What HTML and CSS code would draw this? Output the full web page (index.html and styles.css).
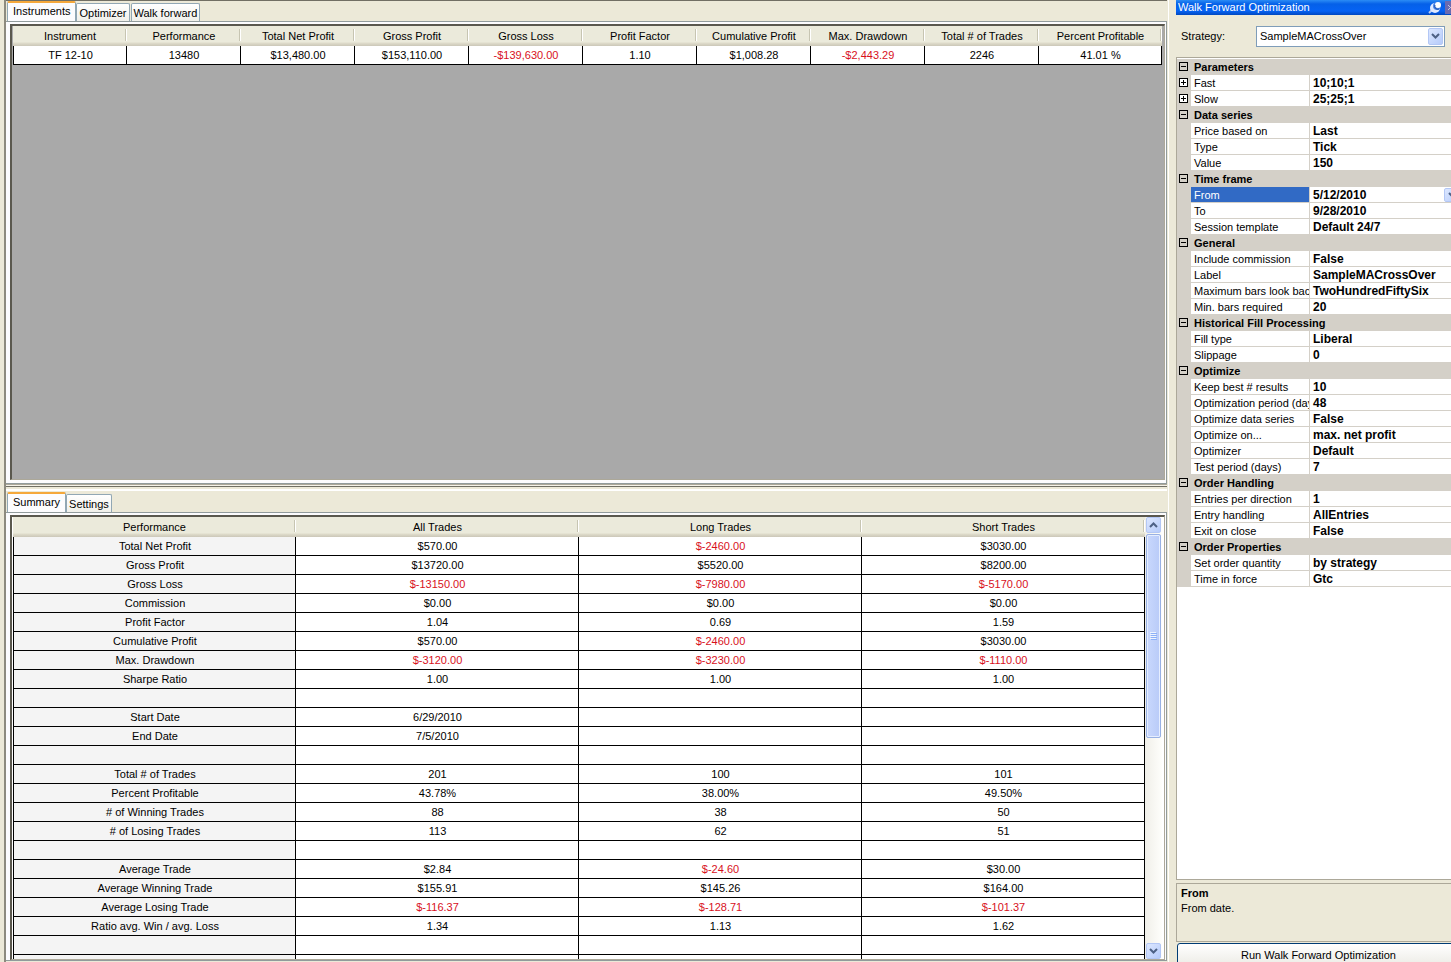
FILE: index.html
```html
<!DOCTYPE html>
<html lang="en">

<head>
    <meta charset="utf-8" />
    <meta name="viewport" content="width=device-width, initial-scale=1.0" />
    <title>Walk Forward Optimization</title>
    <link rel="stylesheet" href="styles.css">
</head>

<body>
    <main class="results">
        <section class="pane pane-top">
            <div class="tabs" role="tablist">
                <button class="tab active" role="tab" aria-selected="true">Instruments</button>
                <button class="tab" role="tab">Optimizer</button>
                <button class="tab" role="tab">Walk forward</button>
            </div>
            <div class="tab-page">
                <div class="grid-box">
                    <table class="grid instruments">
                        <thead>
                            <tr>
                                <th>Instrument</th>
                                <th>Performance</th>
                                <th>Total Net Profit</th>
                                <th>Gross Profit</th>
                                <th>Gross Loss</th>
                                <th>Profit Factor</th>
                                <th>Cumulative Profit</th>
                                <th>Max. Drawdown</th>
                                <th>Total # of Trades</th>
                                <th class="last">Percent Profitable</th>
                            </tr>
                        </thead>
                        <tbody>
                            <tr>
                                <td>TF 12-10</td>
                                <td>13480</td>
                                <td>$13,480.00</td>
                                <td>$153,110.00</td>
                                <td class="neg">-$139,630.00</td>
                                <td>1.10</td>
                                <td>$1,008.28</td>
                                <td class="neg">-$2,443.29</td>
                                <td>2246</td>
                                <td>41.01 %</td>
                            </tr>
                        </tbody>
                    </table>
                </div>
            </div>
        </section>

        <div class="splitter"></div>

        <section class="pane pane-bottom">
            <div class="tabs" role="tablist">
                <button class="tab active" role="tab" aria-selected="true">Summary</button>
                <button class="tab" role="tab">Settings</button>
            </div>
            <div class="tab-page">
                <div class="grid-box summary-box">
                    <div class="grid-scroll">
                        <table class="grid summary">
                            <thead>
                                <tr><th>Performance</th><th>All Trades</th><th>Long Trades</th><th>Short Trades</th></tr>
                            </thead>
                            <tbody>
                                <tr><td>Total Net Profit</td><td>$570.00</td><td class="neg">$-2460.00</td><td>$3030.00</td></tr>
                                <tr><td>Gross Profit</td><td>$13720.00</td><td>$5520.00</td><td>$8200.00</td></tr>
                                <tr><td>Gross Loss</td><td class="neg">$-13150.00</td><td class="neg">$-7980.00</td><td class="neg">$-5170.00</td></tr>
                                <tr><td>Commission</td><td>$0.00</td><td>$0.00</td><td>$0.00</td></tr>
                                <tr><td>Profit Factor</td><td>1.04</td><td>0.69</td><td>1.59</td></tr>
                                <tr><td>Cumulative Profit</td><td>$570.00</td><td class="neg">$-2460.00</td><td>$3030.00</td></tr>
                                <tr><td>Max. Drawdown</td><td class="neg">$-3120.00</td><td class="neg">$-3230.00</td><td class="neg">$-1110.00</td></tr>
                                <tr><td>Sharpe Ratio</td><td>1.00</td><td>1.00</td><td>1.00</td></tr>
                                <tr><td></td><td></td><td></td><td></td></tr>
                                <tr><td>Start Date</td><td>6/29/2010</td><td></td><td></td></tr>
                                <tr><td>End Date</td><td>7/5/2010</td><td></td><td></td></tr>
                                <tr><td></td><td></td><td></td><td></td></tr>
                                <tr><td>Total # of Trades</td><td>201</td><td>100</td><td>101</td></tr>
                                <tr><td>Percent Profitable</td><td>43.78%</td><td>38.00%</td><td>49.50%</td></tr>
                                <tr><td># of Winning Trades</td><td>88</td><td>38</td><td>50</td></tr>
                                <tr><td># of Losing Trades</td><td>113</td><td>62</td><td>51</td></tr>
                                <tr><td></td><td></td><td></td><td></td></tr>
                                <tr><td>Average Trade</td><td>$2.84</td><td class="neg">$-24.60</td><td>$30.00</td></tr>
                                <tr><td>Average Winning Trade</td><td>$155.91</td><td>$145.26</td><td>$164.00</td></tr>
                                <tr><td>Average Losing Trade</td><td class="neg">$-116.37</td><td class="neg">$-128.71</td><td class="neg">$-101.37</td></tr>
                                <tr><td>Ratio avg. Win / avg. Loss</td><td>1.34</td><td>1.13</td><td>1.62</td></tr>
                                <tr><td></td><td></td><td></td><td></td></tr>
                                <tr><td></td><td></td><td></td><td></td></tr>
                            </tbody>
                        </table>
                    </div>
                    <div class="scrollbar">
                        <button class="scroll-btn" aria-label="Scroll up">
                            <svg width="9" height="6" viewBox="0 0 9 6"><path d="M1 5 4.500 1.500 8 5" /></svg>
                        </button>
                        <div class="track">
                            <div class="thumb">
                                <svg width="7" height="8" viewBox="0 0 7 8" shape-rendering="crispEdges">
                                    <path class="grip-light" d="M0 .5h6M0 2.500h6M0 4.500h6M0 6.500h6" />
                                    <path class="grip-dark" d="M1 1.500h6M1 3.500h6M1 5.500h6M1 7.500h6" />
                                </svg>
                            </div>
                        </div>
                        <button class="scroll-btn" aria-label="Scroll down">
                            <svg width="9" height="6" viewBox="0 0 9 6"><path d="M1 1 4.500 4.500 8 1" /></svg>
                        </button>
                    </div>
                </div>
            </div>
        </section>
    </main>

    <aside class="optimization">
        <header class="titlebar">
            <h1>Walk Forward Optimization</h1>
            <button class="pin" aria-label="Pin">
                <svg width="14" height="14" viewBox="0 0 14 14">
                    <path d="M1 13 4 10" stroke="#b9cdf5" stroke-width="2" />
                    <circle cx="7" cy="8" r="5" fill="#dfe9ff" />
                    <circle cx="9" cy="6" r="4" fill="#4b86e8" />
                    <circle cx="10" cy="5" r="3" fill="#fff" />
                    <path d="M7 5a3 3 0 0 0 4 4" stroke="#1c4fae" />
                </svg>
            </button>
            <button class="close" aria-label="Close">
                <svg width="6" height="13" viewBox="0 0 6 13"><path d="M3 4l4 4M3 9l4-4" stroke="#c6c6dc" /></svg>
            </button>
        </header>

        <div class="strategy">
            <label for="strategy">Strategy:</label>
            <div class="combo">
                <select id="strategy">
                    <option>SampleMACrossOver</option>
                </select>
                <span class="combo-arrow">
                    <svg width="9" height="6" viewBox="0 0 9 6"><path d="M1 1 4.500 4.500 8 1" /></svg>
                </span>
            </div>
        </div>

        <div class="property-box">
            <table class="properties">
                <colgroup><col class="col-toggle"><col class="col-name"><col></colgroup>
                <tbody>
                    <tr class="category"><td><button class="toggle open" aria-label="Collapse"></button></td><th colspan="2">Parameters</th></tr>
                    <tr><td><button class="toggle" aria-label="Expand"></button></td><th>Fast</th><td>10;10;1</td></tr>
                    <tr><td><button class="toggle" aria-label="Expand"></button></td><th>Slow</th><td>25;25;1</td></tr>
                </tbody>
                <tbody>
                    <tr class="category"><td><button class="toggle open" aria-label="Collapse"></button></td><th colspan="2">Data series</th></tr>
                    <tr><td></td><th>Price based on</th><td>Last</td></tr>
                    <tr><td></td><th>Type</th><td>Tick</td></tr>
                    <tr><td></td><th>Value</th><td>150</td></tr>
                </tbody>
                <tbody>
                    <tr class="category"><td><button class="toggle open" aria-label="Collapse"></button></td><th colspan="2">Time frame</th></tr>
                    <tr class="selected">
                        <td></td>
                        <th>From</th>
                        <td>
                            <div class="date-value">
                                <span>5/12/2010</span>
                                <button class="date-btn" aria-label="Pick a date">
                                    <svg width="9" height="6" viewBox="0 0 9 6"><path d="M1 1 4.500 4.500 8 1" /></svg>
                                </button>
                            </div>
                        </td>
                    </tr>
                    <tr><td></td><th>To</th><td>9/28/2010</td></tr>
                    <tr><td></td><th>Session template</th><td>Default 24/7</td></tr>
                </tbody>
                <tbody>
                    <tr class="category"><td><button class="toggle open" aria-label="Collapse"></button></td><th colspan="2">General</th></tr>
                    <tr><td></td><th>Include commission</th><td>False</td></tr>
                    <tr><td></td><th>Label</th><td>SampleMACrossOver</td></tr>
                    <tr><td></td><th>Maximum bars look back</th><td>TwoHundredFiftySix</td></tr>
                    <tr><td></td><th>Min. bars required</th><td>20</td></tr>
                </tbody>
                <tbody>
                    <tr class="category"><td><button class="toggle open" aria-label="Collapse"></button></td><th colspan="2">Historical Fill Processing</th></tr>
                    <tr><td></td><th>Fill type</th><td>Liberal</td></tr>
                    <tr><td></td><th>Slippage</th><td>0</td></tr>
                </tbody>
                <tbody>
                    <tr class="category"><td><button class="toggle open" aria-label="Collapse"></button></td><th colspan="2">Optimize</th></tr>
                    <tr><td></td><th>Keep best # results</th><td>10</td></tr>
                    <tr><td></td><th>Optimization period (day</th><td>48</td></tr>
                    <tr><td></td><th>Optimize data series</th><td>False</td></tr>
                    <tr><td></td><th>Optimize on...</th><td>max. net profit</td></tr>
                    <tr><td></td><th>Optimizer</th><td>Default</td></tr>
                    <tr><td></td><th>Test period (days)</th><td>7</td></tr>
                </tbody>
                <tbody>
                    <tr class="category"><td><button class="toggle open" aria-label="Collapse"></button></td><th colspan="2">Order Handling</th></tr>
                    <tr><td></td><th>Entries per direction</th><td>1</td></tr>
                    <tr><td></td><th>Entry handling</th><td>AllEntries</td></tr>
                    <tr><td></td><th>Exit on close</th><td>False</td></tr>
                </tbody>
                <tbody>
                    <tr class="category"><td><button class="toggle open" aria-label="Collapse"></button></td><th colspan="2">Order Properties</th></tr>
                    <tr><td></td><th>Set order quantity</th><td>by strategy</td></tr>
                    <tr><td></td><th>Time in force</th><td>Gtc</td></tr>
                </tbody>
            </table>
        </div>

        <div class="description">
            <h2>From</h2>
            <p>From date.</p>
        </div>

        <button class="run">Run Walk Forward Optimization</button>
    </aside>
</body>

</html>
```
FILE: styles.css
```css
* {
    box-sizing: border-box;
}

body {
    display: flex;
    height: 100vh;
    margin: 0;
    overflow: hidden;
    background: #ece9d8;
    color: #000;
    font-family: "Liberation Sans", Arial, sans-serif;
    font-size: 11px;
    line-height: 14px;
}

button,
select {
    margin: 0;
    padding: 0;
    font: inherit;
    color: inherit;
}

h1,
h2,
p {
    margin: 0;
    font-size: 11px;
}

svg {
    display: block;
    fill: none;
}

/* left side */
.results {
    flex: 1;
    min-width: 0;
    display: flex;
    flex-direction: column;
    margin-left: 4px;
    padding-right: 1px;
    border-left: 2px solid #8d8b7f;
    border-right: 1px solid #fff;
}

.pane {
    display: flex;
    flex-direction: column;
    min-height: 0;
    border-top: 1px solid #716f64;
}

.pane-top {
    flex: 0 0 484px;
}

.pane-bottom {
    flex: 1;
    border-top-color: #fff;
    padding-bottom: 1px;
}

.splitter {
    height: 6px;
    border-top: 1px solid #aca899;
    border-bottom: 1px solid #fff;
    box-shadow: inset 0 1px #f5f3ea, inset 0 2px #716f64;
}

.tabs {
    display: flex;
    align-items: flex-end;
    gap: 1px;
    height: 20px;
    padding-left: 1px;
}

.pane-bottom .tabs {
    height: 21px;
}

.tab {
    height: 18px;
    padding: 0 2px;
    border: 1px solid #91a7b4;
    border-bottom: 0;
    border-radius: 2px 2px 0 0;
    background: linear-gradient(#fff, #f0f0ea);
}

.tab.active {
    height: 20px;
    margin-right: -1px;
    padding: 0 5px 3px;
    border-top: 2px solid #f5a83b;
    background: #fcfcfe;
}

.tab-page {
    flex: 1;
    min-height: 0;
    display: flex;
    padding: 2px 1px 3px 4px;
    border: 1px solid #919b9c;
    border-left: 0;
    background: #fcfcfe;
}

.pane-bottom .tab-page {
    padding-bottom: 0;
}

.grid-box {
    flex: 1;
    min-width: 0;
    padding: 0 2px 0 1px;
    border: 1px solid #aca899;
    border-top: 2px solid #5a584e;
    border-left: 2px solid #5a584e;
    background: #a9a9a9;
    overflow: hidden;
}

.summary-box {
    display: flex;
    background: #fff;
}

.grid-scroll {
    flex: 1;
    overflow: hidden;
}

.grid {
    width: 100%;
    table-layout: fixed;
    border-collapse: separate;
    border-spacing: 0;
    text-align: center;
}

.grid th,
.grid td {
    height: 19px;
    padding: 0;
    white-space: nowrap;
}

.grid th {
    height: 20px;
    padding-bottom: 1px;
    background: linear-gradient(90deg, transparent calc(100% - 1px), #fff 0) 0 3px / 100% 12px no-repeat,
        linear-gradient(90deg, transparent calc(100% - 2px), #c7c5b2 0) 0 3px / 100% 12px no-repeat,
        linear-gradient(#ebeadb 16px, #dfdccb 17px, #cbc7b8 20px);
    font-weight: normal;
}

.grid td {
    padding-left: 1px;
    border-right: 1px solid #000;
    border-bottom: 1px solid #000;
    background: #fff;
}

.grid td:first-child {
    border-left: 1px solid #000;
}

.grid .neg {
    color: #d8101c;
}

.instruments th {
    width: 114px;
}

.instruments th.last {
    width: auto;
}

.summary td:first-child {
    background: #f4f4f4;
}

.scrollbar {
    flex: 0 0 17px;
    display: flex;
    flex-direction: column;
    background: linear-gradient(90deg, #f0efe9, #fefefb);
}

.scroll-btn,
.combo-arrow,
.date-btn {
    display: flex;
    align-items: center;
    justify-content: center;
    border: 1px solid #b3c7f5;
    border-radius: 2px;
    background: linear-gradient(135deg, #dce7ff, #b6cbfa);
}

.scroll-btn {
    height: 16px;
    margin: 0 1px;
}

.scroll-btn path,
.combo-arrow path,
.date-btn path {
    stroke: #4d6185;
    stroke-width: 2;
}

.track {
    flex: 1;
    padding: 1px;
}

.thumb {
    display: flex;
    align-items: center;
    justify-content: center;
    height: 50%;
    border: 1px solid #98b1e4;
    border-radius: 2px;
    background: linear-gradient(90deg, #c9d8fd, #b9cbf8);
    box-shadow: inset 0 0 0 1px #e6eeff;
}

.grip-light {
    stroke: #eef4fe;
}

.grip-dark {
    stroke: #8cb0f8;
}

/* right side */
.optimization {
    flex: 0 0 275px;
    display: flex;
    flex-direction: column;
    margin-left: 7px;
    overflow: hidden;
}

.titlebar {
    display: flex;
    align-items: center;
    height: 15px;
    padding: 0 0 1px 2px;
    background: linear-gradient(#2b8cf5, #0560e8 4px, #0663f4 11px, #0148c0);
    color: #fff;
}

.titlebar h1 {
    flex: 1;
    font-weight: normal;
}

.titlebar button {
    border: 0;
    background: none;
}

.titlebar .close {
    margin-left: 3px;
    background: #6a6bb0;
}

.strategy {
    display: flex;
    align-items: center;
    height: 42px;
    padding: 0 6px 0 5px;
}

.strategy label {
    width: 75px;
}

.combo {
    flex: 1;
    display: grid;
}

.combo select {
    grid-area: 1 / 1;
    height: 21px;
    padding-left: 3px;
    appearance: none;
    border: 1px solid #7f9db9;
    border-radius: 0;
    background: #fff;
}

.combo-arrow {
    grid-area: 1 / 1;
    justify-self: end;
    width: 15px;
    margin: 2px;
    pointer-events: none;
}

.property-box {
    flex: 1;
    min-height: 0;
    overflow: hidden;
    padding-top: 1px;
    border: 1px solid #aca899;
    border-right: 0;
    background: #fff;
}

.properties {
    width: 100%;
    table-layout: fixed;
    border-collapse: separate;
    border-spacing: 0;
}

.col-toggle {
    width: 14px;
}

.col-name {
    width: 119px;
}

.properties th,
.properties td {
    height: 16px;
    padding: 1px 0 0 3px;
    border-bottom: 1px solid #d4d0c8;
    line-height: 14px;
    text-align: left;
    white-space: nowrap;
    overflow: hidden;
}

.properties th {
    border-right: 1px solid #d4d0c8;
    font-weight: normal;
}

.properties td {
    font-size: 12px;
    font-weight: bold;
}

.properties td:first-child {
    padding: 0 0 0 2px;
    background: #d4d0c8;
}

.properties .category th {
    background: #d4d0c8;
    font-weight: bold;
}

.properties .selected th {
    background: #316ac5;
    color: #fff;
}

.toggle {
    display: block;
    width: 9px;
    height: 9px;
    border: 1px solid #000;
    background: linear-gradient(#000, #000) center / 5px 1px no-repeat,
        linear-gradient(#000, #000) center / 1px 5px no-repeat, #fff;
}

.toggle.open {
    background: linear-gradient(#000, #000) center / 5px 1px no-repeat, #d4d0c8;
}

.date-value {
    display: flex;
    justify-content: space-between;
}

.date-btn {
    width: 16px;
    height: 14px;
    margin-right: -9px;
}

.description {
    height: 59px;
    margin-top: 3px;
    padding: 2px 4px;
    border: 1px solid #aca899;
    border-right: 0;
}

.description h2 {
    line-height: 15px;
}

.run {
    height: 24px;
    margin: 1px -9px -5px 1px;
    flex-shrink: 0;
    border: 1px solid #003c74;
    border-radius: 3px;
    background: linear-gradient(#fff, #ecebe5);
}
```
